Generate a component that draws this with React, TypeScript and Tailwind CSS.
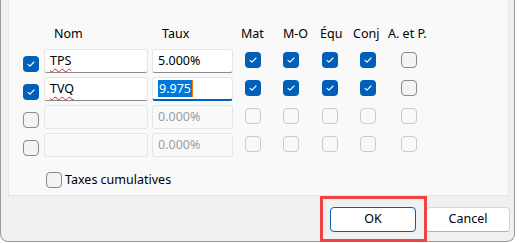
import { ReactNode } from 'react'

const COLS = [
  { label: 'Mat', w: 'w-[38px]', lab: 'pl-[7px]' },
  { label: 'M-O', w: 'w-[38px]', lab: 'pl-[11px]' },
  { label: 'Équ', w: 'w-[40px]', lab: 'pl-[10px]' },
  { label: 'Conj', w: 'w-[36px]', lab: 'pl-[3px]' },
  { label: 'A. et P.', w: 'w-[46px]', lab: 'pl-[2px]' },
]

const ROWS = [
  { on: true, nom: 'TPS', taux: '5.000%', cols: [true, true, true, true, false], enabled: true },
  { on: true, nom: 'TVQ', taux: '9.975', cols: [true, true, true, true, false], enabled: true, focus: true },
  { on: false, nom: '', taux: '0.000%', cols: [false, false, false, false, false], enabled: false },
  { on: false, nom: '', taux: '0.000%', cols: [false, false, false, false, false], enabled: false },
]

function Check({ on, disabled }: { on: boolean; disabled?: boolean }) {
  if (on) {
    return (
      <div className="w-4 h-4 rounded-[4px] bg-[#005fb8] flex items-center justify-center">
        <svg width="16" height="16" viewBox="0 0 16 16" fill="none">
          <path d="M5 8.3 L7 10.2 L11 6" stroke="white" strokeWidth="1.1" strokeLinecap="round" strokeLinejoin="round" />
        </svg>
      </div>
    )
  }
  return (
    <div
      className={`w-4 h-4 rounded-[4px] border ${
        disabled ? 'border-[#cacaca] bg-[#f9f9f9]' : 'border-[#8a8a8a] bg-[#f3f3f3]'
      }`}
    />
  )
}

function Field({ width, children, disabled, focus }: { width: string; children?: ReactNode; disabled?: boolean; focus?: boolean }) {
  return (
    <div
      className={`${width} h-[24px] rounded-[3px] border border-[#e5e5e5] flex items-center pl-[5px] ${
        disabled
          ? 'bg-[#f9f9f9] text-[#9d9d9d]'
          : focus
          ? 'bg-white border-b-2 border-b-[#005fb8] text-black'
          : 'bg-white border-b-[#8a8a8a] text-black'
      }`}
    >
      {children}
    </div>
  )
}

export default function App() {
  return (
    <div className="w-[519px] h-[243px] bg-white font-['Noto_Sans',sans-serif] text-[12.5px] text-black">
      <div className="relative w-[515px] h-[243px] bg-[#f0f0f0] border-l border-r border-b border-[#9a9a9a] rounded-b-[8px]">
        {/* panel */}
        <div className="ml-[7px] -mt-px w-[501px] h-[197px] bg-[#f9f9f9] border border-[#e5e5e5]">
          {/* header */}
          <div className="flex mt-[24px] h-[20px] items-center leading-none">
            <div className="w-[35px]" />
            <div className="w-[108px] pl-[10px]">Nom</div>
            <div className="w-[82px] pl-[10px]">Taux</div>
            {COLS.map((c) => (
              <div key={c.label} className={`${c.w} ${c.lab}`}>
                {c.label}
              </div>
            ))}
          </div>

          {/* rows */}
          <div className="mt-[5px] flex flex-col gap-[4px]">
            {ROWS.map((r, i) => (
              <div key={i} className="flex h-[24px]">
                <div className="w-[35px] pl-[14px] pt-[7px]">
                  <Check on={r.on} />
                </div>
                <Field width="w-[104px]" disabled={!r.enabled}>
                  {r.nom && (
                    <span className="underline decoration-wavy decoration-[#e02020] decoration-1 underline-offset-[3px]">
                      {r.nom}
                    </span>
                  )}
                </Field>
                <div className="w-[4px]" />
                <Field width="w-[81px]" disabled={!r.enabled} focus={r.focus}>
                  {r.focus ? (
                    <span className="flex items-center">
                      <span className="bg-[#0078d7] text-white pl-px pr-px leading-[17px]">{r.taux}</span>
                      <span className="w-px h-[17px] bg-[#f07800]" />
                    </span>
                  ) : (
                    r.taux
                  )}
                </Field>
                <div className="w-[1px]" />
                {COLS.map((c, j) => (
                  <div key={c.label} className={`${c.w} flex justify-center pt-[3px]`}>
                    <Check on={r.cols[j]} disabled={!r.enabled} />
                  </div>
                ))}
              </div>
            ))}
          </div>

          {/* cumulative */}
          <div className="flex items-center mt-[14px] ml-[37px] gap-[3px]">
            <Check on={false} />
            <span>Taxes cumulatives</span>
          </div>
        </div>

        {/* buttons */}
        <div className="flex justify-end gap-[10px] mt-[11px] pr-[4px]">
          <button className="w-[86px] h-[25px] rounded-[4px] bg-white border border-[#005fb8] text-black text-[12.5px]">
            OK
          </button>
          <button className="w-[84px] h-[25px] rounded-[4px] bg-white border border-[#d5d5d5] border-b-[#b0b0b0] text-black text-[12.5px]">
            Cancel
          </button>
        </div>

        {/* annotation */}
        <div className="absolute left-[319px] top-[197px] w-[107px] h-[46px] border-[3px] border-[#ee4444]" />
      </div>
    </div>
  )
}
